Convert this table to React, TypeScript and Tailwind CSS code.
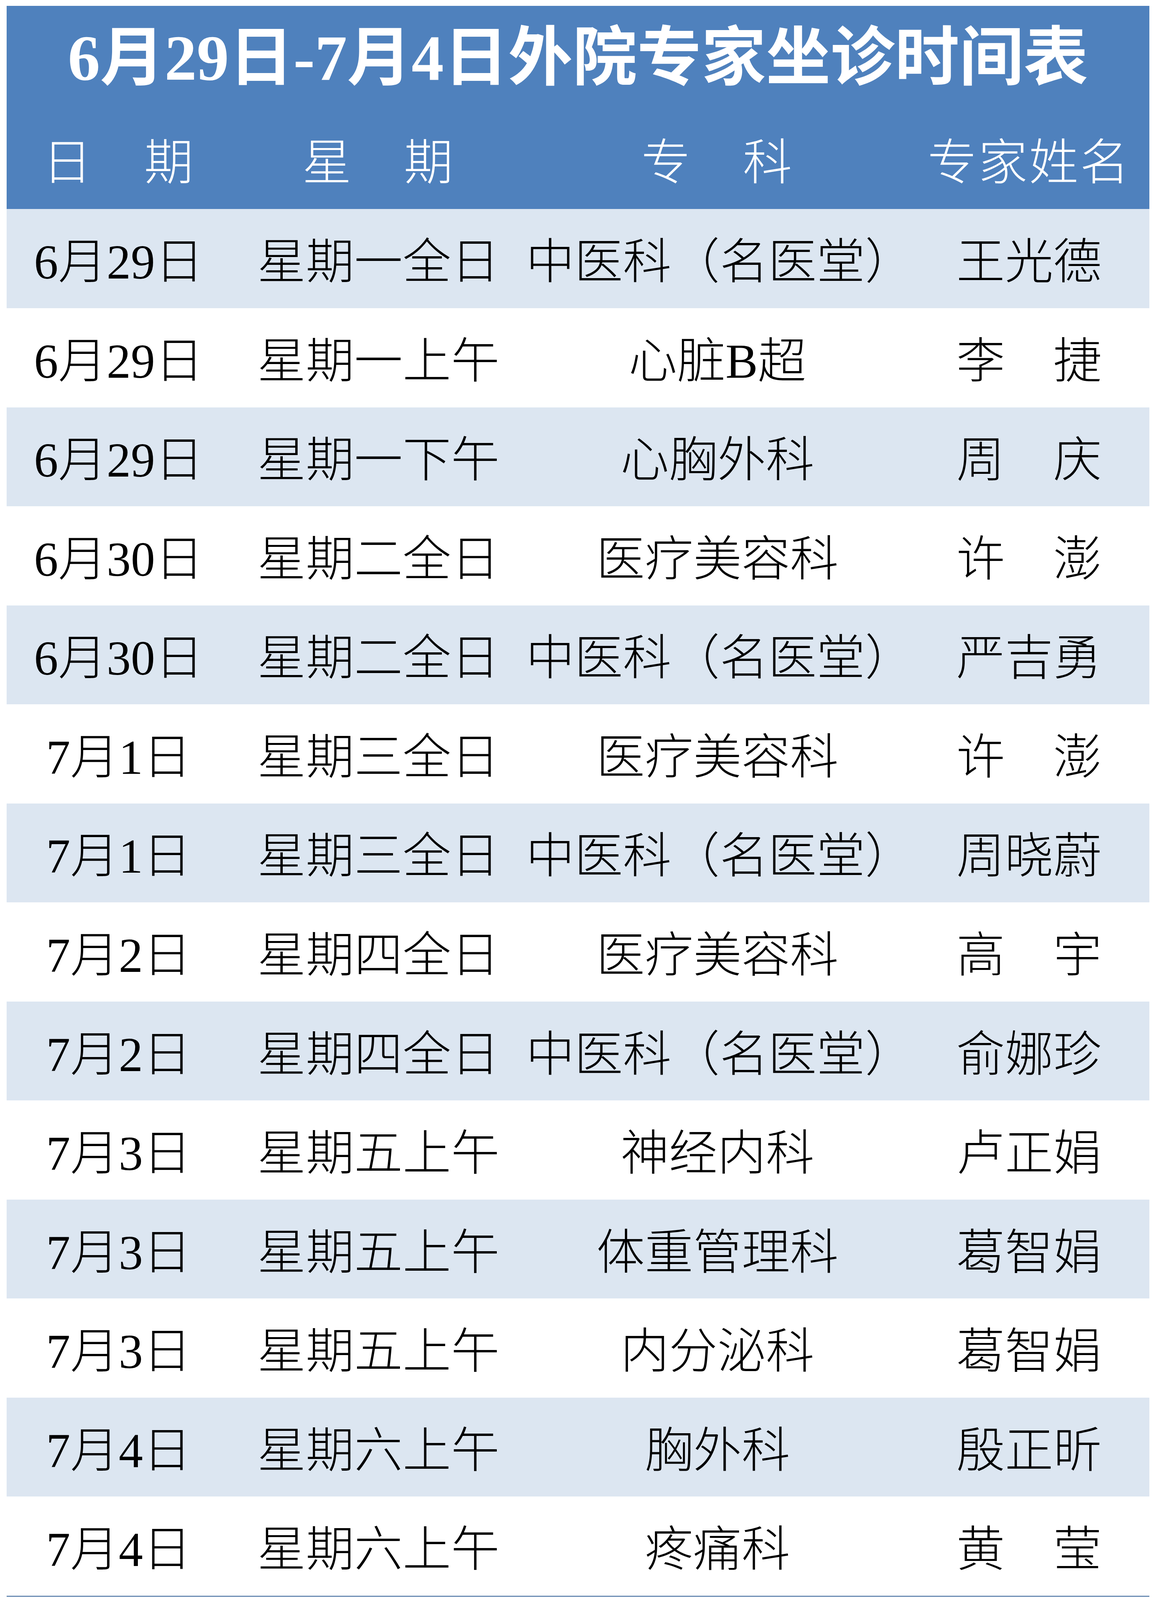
const rows: [string, string, string, string][] = [
  ["6月29日", "星期一全日", "中医科（名医堂）", "王光德"],
  ["6月29日", "星期一上午", "心脏B超", "李　捷"],
  ["6月29日", "星期一下午", "心胸外科", "周　庆"],
  ["6月30日", "星期二全日", "医疗美容科", "许　澎"],
  ["6月30日", "星期二全日", "中医科（名医堂）", "严吉勇"],
  ["7月1日", "星期三全日", "医疗美容科", "许　澎"],
  ["7月1日", "星期三全日", "中医科（名医堂）", "周晓蔚"],
  ["7月2日", "星期四全日", "医疗美容科", "高　宇"],
  ["7月2日", "星期四全日", "中医科（名医堂）", "俞娜珍"],
  ["7月3日", "星期五上午", "神经内科", "卢正娟"],
  ["7月3日", "星期五上午", "体重管理科", "葛智娟"],
  ["7月3日", "星期五上午", "内分泌科", "葛智娟"],
  ["7月4日", "星期六上午", "胸外科", "殷正昕"],
  ["7月4日", "星期六上午", "疼痛科", "黄　莹"],
];

const font = "font-['Liberation_Serif','Noto_Sans_CJK_SC',serif]";
const cols = "grid grid-cols-[574px_756px_980px_616px] items-center";

export default function App() {
  return (
    <div className={`w-[2960px] h-screen bg-white pt-[15px] px-[17px] pb-[8px] flex flex-col ${font}`}>
      {/* title + column headers + 14 rows, proportioned 280 : 266 x 15 */}
      <div className="w-[2926px] flex-1 min-h-0 grid grid-rows-[280fr_repeat(15,266fr)] border-b-[3px] border-[#6b8cb3]">
        <div className="bg-[#4f81bd] text-white flex items-center justify-center text-[165px] font-bold leading-none">
          6月29日-7月4日外院专家坐诊时间表
        </div>
        <div className={`${cols} bg-[#4f81bd] text-white pt-[18px] text-[126px] font-light leading-none tracking-[4px]`}>
          <div className="text-center">日　期</div>
          <div className="text-center">星　期</div>
          <div className="text-center">专　科</div>
          <div className="text-center">专家姓名</div>
        </div>

        {rows.map((r, i) => (
          <div
            key={i}
            className={`${cols} pt-[20px] text-[124px] font-light leading-none text-black ${
              i % 2 === 0 ? "bg-[#dce6f1]" : "bg-white"
            }`}
          >
            <div className="text-center">{r[0]}</div>
            <div className="text-center">{r[1]}</div>
            <div className="text-center">{r[2]}</div>
            <div className="text-center">{r[3]}</div>
          </div>
        ))}
      </div>
    </div>
  );
}
